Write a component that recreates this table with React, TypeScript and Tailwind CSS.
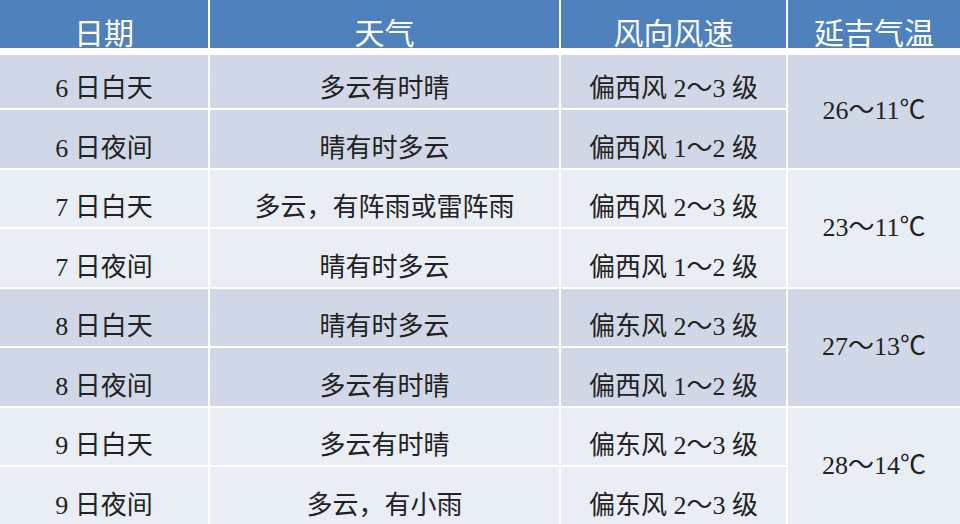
import React from 'react'

// 延吉天气预报表
const rows = [
  { day: '6 日白天', weather: '多云有时晴', wind: '偏西风 2～3 级' },
  { day: '6 日夜间', weather: '晴有时多云', wind: '偏西风 1～2 级' },
  { day: '7 日白天', weather: '多云，有阵雨或雷阵雨', wind: '偏西风 2～3 级' },
  { day: '7 日夜间', weather: '晴有时多云', wind: '偏西风 1～2 级' },
  { day: '8 日白天', weather: '晴有时多云', wind: '偏东风 2～3 级' },
  { day: '8 日夜间', weather: '多云有时晴', wind: '偏西风 1～2 级' },
  { day: '9 日白天', weather: '多云有时晴', wind: '偏东风 2～3 级' },
  { day: '9 日夜间', weather: '多云，有小雨', wind: '偏东风 2～3 级' },
]

const temps = ['26～11℃', '23～11℃', '27～13℃', '28～14℃']

const headers = ['日期', '天气', '风向风速', '延吉气温']

export default function App() {
  return (
    <div className="w-[960px] h-[524px] overflow-hidden bg-white text-[#222]">
      {/* 表头 */}
      <div className="grid grid-cols-[208px_349px_225px_172px] gap-x-[2px] h-[48px] mb-[7px] font-['Noto_Sans_CJK_SC',sans-serif]">
        {headers.map((h) => (
          <div key={h} className="bg-[#4f81bd] text-white text-[30px] leading-none flex items-end justify-center pb-[2px]">
            {h}
          </div>
        ))}
      </div>

      {/* 表体：气温列每两行合并 */}
      <div className="grid grid-cols-[208px_349px_225px_172px] grid-rows-[53px_repeat(7,57.5px)] gap-[2px] text-[26px] leading-none font-['Liberation_Serif','Noto_Sans_CJK_SC',serif]">
        {rows.map((r, i) => {
          const group = Math.floor(i / 2)
          const bg = group % 2 === 0 ? 'bg-[#d0d8e8]' : 'bg-[#e9edf4]'
          const cell = `${bg} flex items-end justify-center pb-[6px] whitespace-pre`
          return (
            <React.Fragment key={i}>
              <div className={cell}>{r.day}</div>
              <div className={cell}>{r.weather}</div>
              <div className={cell}>{r.wind}</div>
              {i % 2 === 0 && (
                <div className={`${bg} row-span-2 flex items-center justify-center`}>
                  {temps[group]}
                </div>
              )}
            </React.Fragment>
          )
        })}
      </div>
    </div>
  )
}
